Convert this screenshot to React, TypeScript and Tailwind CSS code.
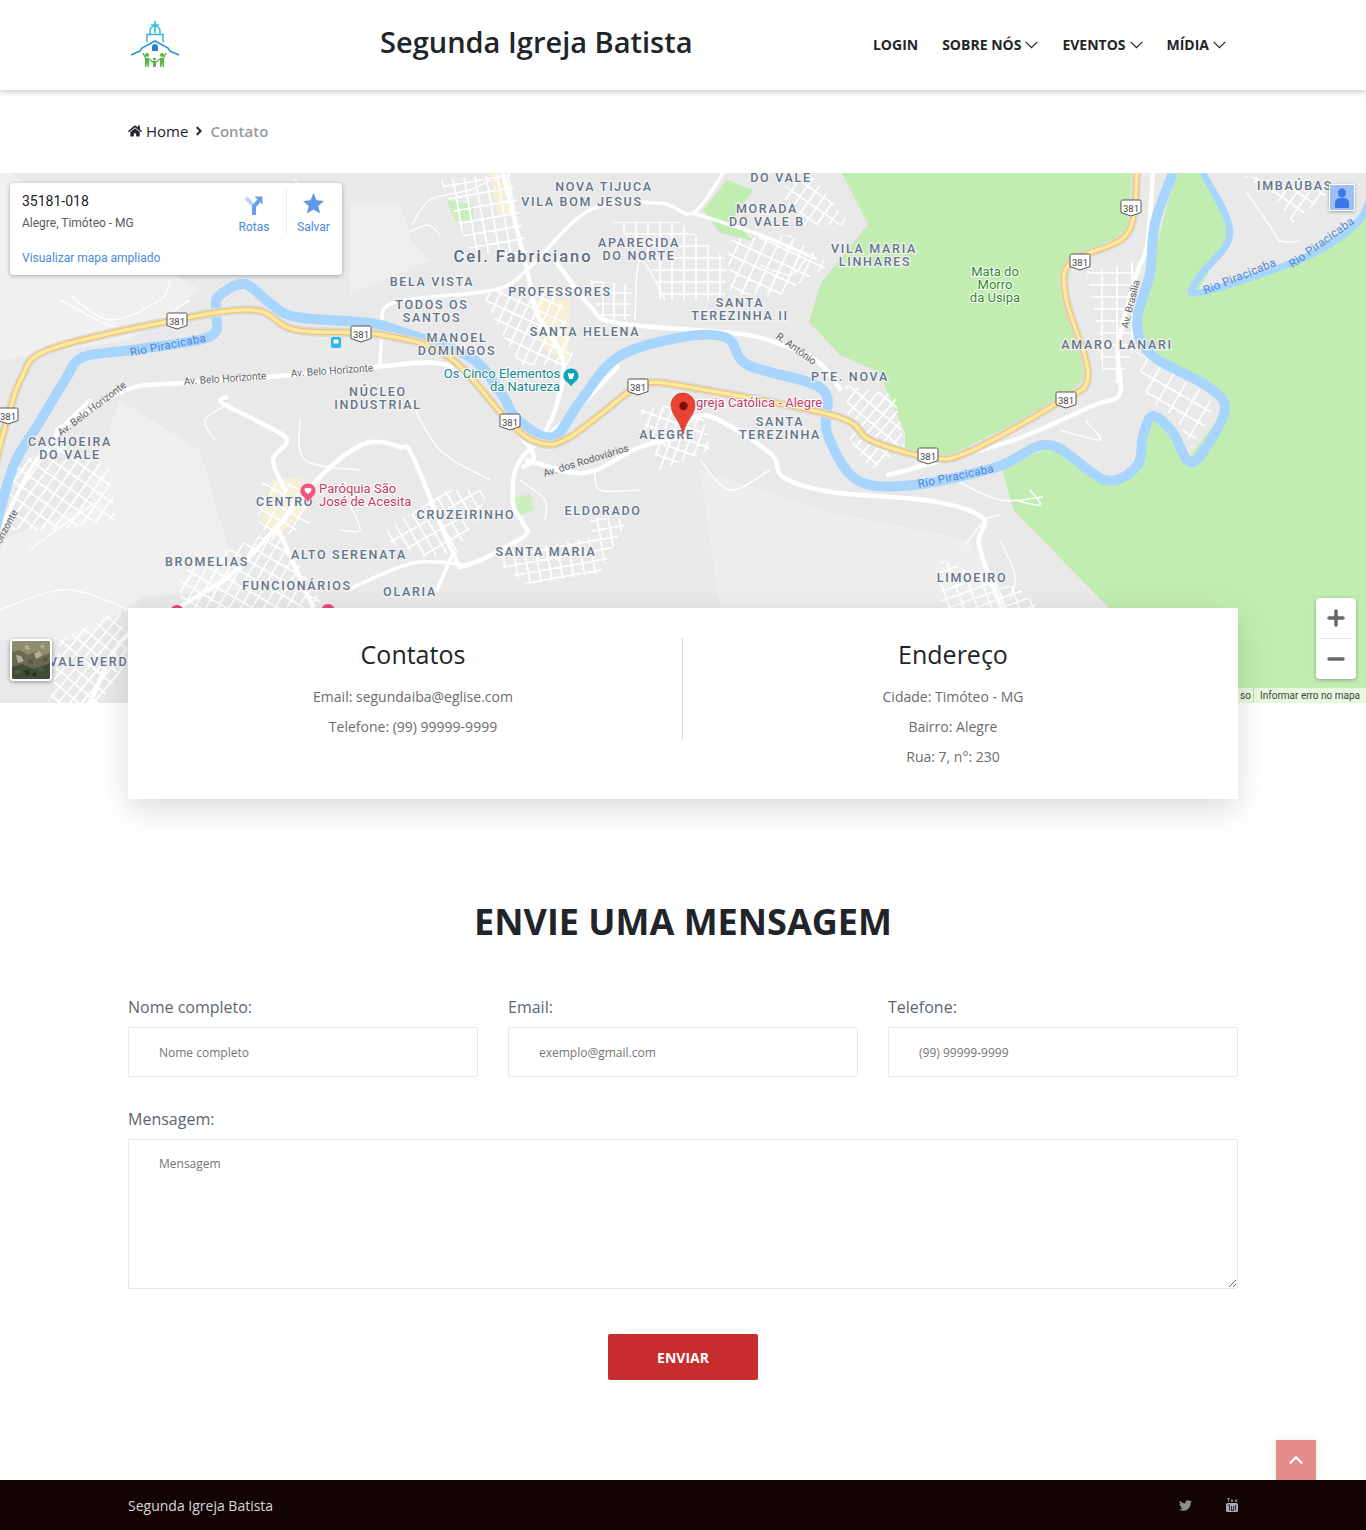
import { ChevronUp, Plus, Minus } from 'lucide-react';
import { FaHome, FaAngleRight, FaTwitter } from 'react-icons/fa';

type Pt = [number, number];

// catmull-rom through the traced points, so rivers and roads don't look faceted
function curve(points: Pt[]) {
  let d = `M${points[0][0]} ${points[0][1]}`;
  for (let i = 0; i < points.length - 1; i++) {
    const p0 = points[i - 1] || points[i];
    const p1 = points[i];
    const p2 = points[i + 1];
    const p3 = points[i + 2] || p2;
    const c1x = p1[0] + (p2[0] - p0[0]) / 6;
    const c1y = p1[1] + (p2[1] - p0[1]) / 6;
    const c2x = p2[0] - (p3[0] - p1[0]) / 6;
    const c2y = p2[1] - (p3[1] - p1[1]) / 6;
    d += ` C${c1x} ${c1y} ${c2x} ${c2y} ${p2[0]} ${p2[1]}`;
  }
  return d;
}

const river: Pt[] = [
  [-6, 535], [13, 467], [39, 423], [65, 380], [83, 357], [131, 350], [209, 337], [216, 313], [218, 297], [244, 284],
  [270, 303], [296, 317], [370, 323], [405, 333], [470, 357], [501, 393], [518, 420], [553, 437], [579, 403],
  [618, 357], [683, 337], [727, 338], [748, 365], [822, 389], [827, 433], [857, 480], [914, 485], [997, 467],
  [1049, 445], [1105, 480], [1137, 466], [1143, 436], [1153, 416], [1173, 433], [1187, 460], [1200, 456], [1225, 410],
  [1207, 386], [1153, 356], [1137, 323], [1150, 273], [1155, 223], [1173, 173],
];
const riverEast: Pt[] = [[1203, 173], [1230, 233], [1200, 276], [1197, 293], [1273, 270], [1320, 250], [1357, 223], [1370, 200]];

const highway: Pt[] = [
  [-4, 462], [9, 413], [22, 377], [48, 350], [165, 322], [253, 310], [296, 330], [383, 335], [449, 357], [510, 423],
  [540, 443], [570, 437], [631, 390], [645, 383], [683, 386], [835, 416], [870, 440], [927, 457], [966, 453],
  [1057, 403], [1088, 376], [1066, 298], [1071, 262], [1127, 234], [1137, 173],
];

const roads: Pt[][] = [
  [[57, 430], [126, 390], [183, 383], [292, 375], [375, 367], [436, 363], [470, 380], [531, 450], [523, 467]],
  [[226, 397], [222, 403], [261, 423], [287, 440], [273, 460], [285, 490]],
  [[277, 527], [327, 470], [367, 443], [400, 447], [413, 457], [453, 553], [467, 565], [523, 537], [523, 523], [513, 503], [520, 460], [566, 420], [618, 367]],
  [[527, 460], [584, 473], [640, 447], [683, 437]],
  [[277, 527], [313, 607]],
  [[277, 527], [230, 575], [174, 610], [122, 640], [90, 703]],
  [[683, 426], [709, 416], [770, 453], [783, 477], [831, 492], [931, 501], [983, 518], [979, 545], [1001, 607]],
  [[888, 475], [918, 467], [1014, 440], [1092, 406], [1120, 393], [1118, 346], [1137, 273], [1147, 246], [1153, 173]],
  [[557, 263], [590, 306], [617, 323], [733, 333], [777, 343], [817, 361], [840, 389]],
  [[503, 173], [527, 270], [537, 313], [563, 360], [555, 410], [540, 440]],
  [[723, 173], [693, 213], [660, 203], [590, 210], [527, 270], [493, 290], [393, 303], [383, 330], [380, 363]],
  [[347, 590], [413, 563], [467, 565]],
  [[453, 553], [437, 590]],
  [[693, 213], [760, 235], [815, 258]],
  [[0, 530], [30, 470], [60, 430], [90, 400]],
];

const thinRoads: Pt[][] = [
  [[70, 295], [110, 320], [160, 300], [170, 280]],
  [[230, 403], [205, 420], [215, 440]],
  [[300, 420], [305, 460], [360, 470]],
  [[410, 400], [440, 450], [490, 480]],
  [[150, 620], [70, 590], [0, 610]],
  [[30, 550], [70, 520], [100, 500]],
  [[700, 460], [730, 490], [770, 470]],
  [[955, 480], [1000, 500], [1043, 497]],
  [[1015, 500], [1040, 505], [1030, 490]],
  [[1085, 420], [1100, 440], [1060, 430]],
  [[1247, 193], [1270, 226], [1280, 241], [1300, 241]],
  [[412, 225], [430, 200], [470, 190], [490, 180]],
  [[410, 232], [428, 225], [440, 235]],
  [[665, 300], [640, 260], [635, 320]],
  [[760, 265], [790, 275], [805, 260]],
  [[595, 470], [600, 490], [640, 490]],
  [[520, 480], [545, 500], [545, 520]],
  [[340, 530], [360, 530], [350, 505]],
  [[295, 180], [320, 210], [340, 190]],
  [[60, 300], [130, 330], [190, 300]],
  [[965, 545], [985, 520], [1000, 515]],
  [[1000, 540], [1015, 575], [1010, 600]],
];

// neighbourhood street meshes: parallel lines clipped to the block's outline
const blocks: { id: string; shape: string; sx: number; sy: number; angle: number }[] = [
  { id: 'b1', shape: '1087,273 1137,261 1133,350 1120,386 1103,373 1097,326', sx: 15, sy: 12, angle: 0 },
  { id: 'b2', shape: '1135,351 1210,396 1212,413 1193,446 1173,416 1148,400', sx: 15, sy: 15, angle: 30 },
  { id: 'b3', shape: '1237,173 1327,193 1293,223 1273,193', sx: 10, sy: 13, angle: 35 },
  { id: 'b4', shape: '10,470 60,440 110,470 115,520 60,530 10,530', sx: 10, sy: 13, angle: 35 },
  { id: 'b5', shape: '440,180 510,173 530,260 470,250', sx: 11, sy: 13, angle: -10 },
  { id: 'b6', shape: '612,222 680,222 727,260 725,300 660,300 650,260', sx: 12, sy: 12, angle: 0 },
  { id: 'b7', shape: '727,240 790,235 830,265 780,295 730,295', sx: 12, sy: 14, angle: 25 },
  { id: 'b8', shape: '845,385 895,395 905,450 870,470 850,440', sx: 9, sy: 14, angle: 40 },
  { id: 'b9', shape: '387,530 447,490 490,490 457,553 427,557 390,543', sx: 10, sy: 14, angle: -30 },
  { id: 'b10', shape: '503,567 497,553 593,537 590,517 627,520 600,573 527,585', sx: 11, sy: 10, angle: -10 },
  { id: 'b11', shape: '180,573 277,527 323,607 180,610', sx: 10, sy: 13, angle: 30 },
  { id: 'b12', shape: '940,560 1020,590 1040,608 940,608', sx: 9, sy: 13, angle: 70 },
  { id: 'b13', shape: '640,410 700,400 710,450 660,470', sx: 9, sy: 12, angle: 20 },
  { id: 'b14', shape: '60,640 120,610 128,660 100,703 50,703', sx: 9, sy: 12, angle: 40 },
  { id: 'b15', shape: '263,483 300,483 310,523 273,543 257,520', sx: 12, sy: 12, angle: 30 },
  { id: 'b16', shape: '480,290 560,290 575,365 520,365 500,330', sx: 10, sy: 13, angle: 25 },
  { id: 'b17', shape: '590,280 632,285 630,320 600,320', sx: 11, sy: 11, angle: 0 },
  { id: 'b18', shape: '780,190 810,173 850,225 800,225', sx: 10, sy: 13, angle: 35 },
];

function StreetBlock({ id, shape, sx, sy, angle }: { id: string; shape: string; sx: number; sy: number; angle: number }) {
  const [cx, cy] = shape.split(' ')[0].split(',').map(Number);
  const lines: string[] = [];
  for (let i = -240; i <= 240; i += sy) lines.push(`M${cx - 300} ${cy + i}H${cx + 300}`);
  for (let i = -240; i <= 240; i += sx) lines.push(`M${cx + i} ${cy - 300}V${cy + 300}`);
  return (
    <g clipPath={`url(#${id})`}>
      <clipPath id={id}>
        <polygon points={shape} />
      </clipPath>
      <path d={lines.join('')} transform={`rotate(${angle} ${cx} ${cy})`} stroke="#fff" strokeWidth="1.7" fill="none" />
    </g>
  );
}

const places: [string, number, number][] = [
  ['NOVA TIJUCA', 604, 187], ['VILA BOM JESUS', 582, 202], ['DO VALE', 781, 178], ['MORADA', 767, 209],
  ['DO VALE B', 767, 222], ['APARECIDA', 639, 243], ['DO NORTE', 639, 256], ['VILA MARIA', 874, 249],
  ['LINHARES', 875, 262], ['BELA VISTA', 432, 282], ['PROFESSORES', 560, 292], ['TODOS OS', 432, 305],
  ['SANTOS', 432, 318], ['SANTA', 740, 303], ['TEREZINHA II', 740, 316], ['SANTA HELENA', 585, 332],
  ['MANOEL', 457, 338], ['DOMINGOS', 457, 351], ['AMARO LANARI', 1117, 345], ['PTE. NOVA', 850, 377],
  ['NÚCLEO', 378, 392], ['INDUSTRIAL', 378, 405], ['SANTA', 780, 422], ['TEREZINHA', 780, 435], ['ALEGRE', 667, 435],
  ['CACHOEIRA', 70, 442], ['DO VALE', 70, 455], ['ELDORADO', 603, 511], ['CRUZEIRINHO', 466, 515], ['CENTRO', 285, 502],
  ['ALTO SERENATA', 349, 555], ['SANTA MARIA', 546, 552], ['BROMELIAS', 207, 562], ['FUNCIONÁRIOS', 297, 586],
  ['OLARIA', 410, 592], ['LIMOEIRO', 972, 578], ['VALE VERDE', 93, 662], ['IMBAÚBAS', 1295, 186],
];

const streetNames: [string, number, number, number, string][] = [
  ['Rio Piracicaba', 168, 346, -11, '#4d86d8'],
  ['Rio Piracicaba', 956, 477, -12, '#4d86d8'],
  ['Rio Piracicaba', 1240, 277, -22, '#4d86d8'],
  ['Rio Piracicaba', 1322, 243, -36, '#4d86d8'],
  ['Av. Belo Horizonte', 225, 379, -4, '#5f6368'],
  ['Av. Belo Horizonte', 332, 371, -4, '#5f6368'],
  ['Av. Belo Horizonte', 92, 409, -37, '#5f6368'],
  ['Horizonte', 5, 530, -62, '#5f6368'],
  ['Av. dos Rodoviários', 586, 461, -17, '#5f6368'],
  ['R. Antônio', 796, 349, 36, '#5f6368'],
  ['Av. Brasília', 1131, 304, -76, '#5f6368'],
];

const shields: Pt[] = [[177, 321], [361, 334], [8, 416], [510, 422], [638, 387], [928, 456], [1066, 400], [1080, 262], [1131, 208]];

function Shield({ x, y }: { x: number; y: number }) {
  return (
    <g transform={`translate(${x} ${y})`}>
      <path d="M-10 -6.5a1.5 1.5 0 0 1 1.5-1.5h17a1.5 1.5 0 0 1 1.5 1.5v11l-10 3.5-10-3.5z" fill="#fff" stroke="#555" strokeWidth="1" />
      <text y="3.5" textAnchor="middle" className="font-['Roboto'] text-[9.5px]" fill="#444">381</text>
    </g>
  );
}

function MapLabel({ x, y, lines, color, anchor = 'start' }: { x: number; y: number; lines: string[]; color: string; anchor?: 'start' | 'middle' }) {
  return (
    <text x={x} y={y} textAnchor={anchor} fill={color} stroke="#fff" strokeWidth="2" className="font-['Roboto'] text-[13px] [paint-order:stroke]">
      {lines.map((line, i) => (
        <tspan key={i} x={x} dy={i ? 13 : 0}>
          {line}
        </tspan>
      ))}
    </text>
  );
}

function MapArt() {
  return (
    <svg viewBox="0 173 1366 530" className="block w-full h-full">
      <rect x="0" y="173" width="1366" height="530" fill="#e9e9e9" />
      <polygon points="0,173 10,173 200,290 130,340 0,360" fill="#f1f0ee" />
      <polygon points="350,203 400,203 413,243 430,260 393,276 350,293" fill="#efefed" />
      <polygon points="120,400 200,450 240,590 100,600 90,480" fill="#efefed" />
      <polygon points="0,540 100,500 170,580 80,640 0,640" fill="#f0f0ee" />
      <polygon points="700,470 820,510 970,540 1010,610 720,610" fill="#efeeec" />
      <polygon points="1000,470 1060,445 1090,480 1020,500" fill="#efeeec" />
      <polygon points="842,173 868,224 821,283 809,322 840,355 879,372 905,433 905,450 940,460 1057,403 1088,376 1066,298 1071,262 1127,234 1132,173" fill="#c2edb0" />
      <polygon points="1175,173 1203,173 1230,233 1197,293 1288,264 1366,217 1366,703 1130,703 1108,607 1014,511 1001,467 1062,443 1105,482 1137,466 1153,416 1187,460 1225,410 1207,386 1153,356 1137,323 1150,273" fill="#c2edb0" />
      <polygon points="727,180 753,190 733,220 753,241 720,233 703,210" fill="#c2edb0" />
      <polygon points="447,200 473,205 473,221 455,221" fill="#c9eeb9" />
      <polygon points="514,498 530,494 534,510 518,516" fill="#cdeebd" />
      <polygon points="272,480 300,478 306,510 275,540 262,520" fill="#f8efd8" />
      <polygon points="530,300 570,300 568,360 545,350" fill="#f8efd8" />
      <polygon points="490,173 505,173 514,215 498,215" fill="#f8efd8" />

      {thinRoads.map((r, i) => (
        <path key={i} d={curve(r)} fill="none" stroke="#fff" strokeWidth="1.4" />
      ))}
      {blocks.map(b => (
        <StreetBlock key={b.id} {...b} />
      ))}
      {roads.map((r, i) => (
        <path key={i} d={curve(r)} fill="none" stroke="#fff" strokeWidth={i < 10 ? 4.5 : 3.5} strokeLinecap="round" strokeLinejoin="round" />
      ))}
      <path d={curve(river)} fill="none" stroke="#a8d5fd" strokeWidth="10" strokeLinejoin="round" />
      <path d={curve(riverEast)} fill="none" stroke="#a8d5fd" strokeWidth="7" strokeLinejoin="round" />
      <path d={curve(highway)} fill="none" stroke="#d9d9d9" strokeWidth="9" strokeLinejoin="round" />
      <path d={curve(highway)} fill="none" stroke="#f5c35f" strokeWidth="5.5" strokeLinejoin="round" />
      <path d={curve(highway)} fill="none" stroke="#fde9a2" strokeWidth="3.5" strokeLinejoin="round" />

      {shields.map(([x, y]) => (
        <Shield key={`${x}-${y}`} x={x} y={y} />
      ))}

      <g fontWeight="500">
        {places.map(([name, x, y]) => (
          <text key={`${name}-${x}`} x={x} y={y + 4} textAnchor="middle" fill="#64748a" stroke="#f4f4f4" strokeWidth="2.4" className="font-['Roboto'] text-[12.5px] tracking-[1.7px] [paint-order:stroke]">
            {name}
          </text>
        ))}
      </g>
      <text x="523" y="262" textAnchor="middle" fill="#5e6b7c" stroke="#f4f4f4" strokeWidth="2.4" className="font-['Roboto'] text-[16.5px] font-medium tracking-[1.95px] [paint-order:stroke]">
        Cel. Fabriciano
      </text>
      {streetNames.map(([name, x, y, angle, color], i) => (
        <text key={i} transform={`translate(${x} ${y}) rotate(${angle})`} y="3" textAnchor="middle" fill={color} className={name.startsWith('Rio') ? "font-['Roboto'] text-[11.5px] tracking-[0.3px]" : "font-['Roboto'] text-[10.2px]"}>
          {name}
        </text>
      ))}

      <MapLabel x={995} y={276} lines={['Mata do', 'Morro', 'da Usipa']} color="#2b8a1e" anchor="middle" />
      <MapLabel x={502} y={378} lines={['Os Cinco Elementos']} color="#12858f" anchor="middle" />
      <MapLabel x={525} y={391} lines={['da Natureza']} color="#12858f" anchor="middle" />
      <MapLabel x={319} y={493} lines={['Paróquia São', 'José de Acesita']} color="#c23a68" />
      <MapLabel x={696} y={407} lines={['greja Católica - Alegre']} color="#c23a68" />

      <rect x="331" y="337" width="10" height="11" rx="2" fill="#29b6f6" />
      <rect x="333.500" y="339.500" width="5" height="4" fill="#fff" />
      <g transform="translate(571 378)">
        <path d="M0 9C-2 5-8 3-8-2a8 8 0 0 1 16 0C8 3 2 5 0 9z" fill="#12a5b5" stroke="#fff" strokeWidth="0.7" />
        <path d="M-3-5h1.500v1h1v-1h1v1h1v-1H3v3l-1 1v2h-4v-2l-1-1z" fill="#fff" />
      </g>
      <g transform="translate(308 493)">
        <path d="M0 10C-2 5-8 3-8-2a8 8 0 0 1 16 0C8 3 2 5 0 10z" fill="#f4527e" stroke="#fff" strokeWidth="0.7" />
        <path d="M0-4.500c-1-1.500-3.800-.8-3.500 1.400C-3.300-1.500-1.200 0 0 1c1.200-1 3.300-2.500 3.500-4.100.3-2.200-2.500-2.900-3.500-1.400z" fill="#fff" />
      </g>
      <circle cx="177" cy="612" r="7" fill="#e8457a" />
      <circle cx="328" cy="611" r="7" fill="#e8457a" />

      <circle cx="681" cy="400" r="7" fill="#e8457a" />
      <path d="M683 434C680 420 671 415 671 405a12 12 0 0 1 24 0C695 415 686 420 683 434z" fill="#ea4335" stroke="#c5352a" strokeWidth="0.6" />
      <circle cx="683.500" cy="406" r="4.200" fill="#7b0d0d" />
    </svg>
  );
}

function InfoWindow() {
  return (
    <div className="absolute left-[10px] top-[10px] w-[332px] h-[92px] bg-white rounded-sm shadow-[0_1px_4px_rgba(0,0,0,0.3)] font-['Roboto',sans-serif] pl-3 pt-[9px]">
      <div className="text-sm leading-[19px] text-[#202124]">35181-018</div>
      <div className="text-xs leading-4 mt-[4px] text-[#5b5b5b]">Alegre, Timóteo - MG</div>
      <div className="text-xs leading-4 mt-[19px] text-[#4a89dc]">Visualizar mapa ampliado</div>
      <div className="absolute left-[229px] top-[12px] w-[30px] flex flex-col items-center">
        <svg width="20" height="20" viewBox="0 0 20 20">
          <path d="M2 2.500l7 8" stroke="#b8d4f7" strokeWidth="4" fill="none" />
          <path d="M10 20v-8.500l5-6" stroke="#6a9fe8" strokeWidth="4" fill="none" />
          <path d="M10.500 1.500h8v8z" fill="#6a9fe8" />
        </svg>
        <span className="text-xs leading-4 mt-[4px] text-[#4a89dc]">Rotas</span>
      </div>
      <div className="absolute left-[276px] top-[5px] w-[1px] h-[46px] bg-[#ececec]" />
      <div className="absolute left-[285px] top-[10px] w-[37px] flex flex-col items-center">
        <svg width="21" height="21" viewBox="0 0 21 21">
          <path d="M10.500 0l3 7.300 7.500.6-5.700 5 1.800 7.600-6.600-4.100-6.600 4.100 1.800-7.600-5.700-5 7.500-.6z" fill="#5f97e6" />
        </svg>
        <span className="text-xs leading-4 mt-[5px] text-[#4a89dc]">Salvar</span>
      </div>
    </div>
  );
}

function MapControls() {
  return (
    <>
      <div className="absolute left-[1329px] top-[11px] w-[26px] h-[27px] bg-[#9dbff7] border border-white shadow-[0_1px_3px_rgba(0,0,0,0.3)] flex items-center justify-center">
        <svg width="16" height="20" viewBox="0 0 16 20">
          <ellipse cx="8" cy="5" rx="4" ry="4.500" fill="#3b78e7" />
          <path d="M1 20v-5a5 5 0 0 1 5-5h4a5 5 0 0 1 5 5v5z" fill="#3b78e7" />
        </svg>
      </div>
      <div className="absolute left-[1316px] top-[425px] w-[40px] h-[81px] bg-white rounded-sm shadow-[0_1px_4px_rgba(0,0,0,0.3)] flex flex-col items-center text-[#666]">
        <div className="h-[40px] flex items-center justify-center">
          <Plus size={24} strokeWidth={3.5} absoluteStrokeWidth />
        </div>
        <div className="w-[30px] h-[1px] bg-[#e6e6e6]" />
        <div className="flex-1 flex items-center justify-center">
          <Minus size={24} strokeWidth={3.5} absoluteStrokeWidth />
        </div>
      </div>
      <div className="absolute left-[10px] top-[466px] w-[42px] h-[42px] border-2 border-white rounded-sm shadow-[0_1px_4px_rgba(0,0,0,0.4)] overflow-hidden">
        <svg viewBox="0 0 38 38" className="block w-full h-full">
          <rect width="38" height="38" fill="#6b6a50" />
          <path d="M0 0h38v12l-8 3-6-5-8 4-9-5-7 2z" fill="#8f8c70" />
          <path d="M0 26l10-3 12 5 16-6v16H0z" fill="#3f4c38" />
          <path d="M4 14l5 1 3 5-6 2zM22 12l6-2 2 5-6 3zM13 4l4 1 1 4-5-1zM29 3l4 2-2 3-3-2z" fill="#b5ae96" />
          <path d="M16 18l5 1 1 4-6-1zM2 30l5-2 2 4-5 2zM26 27l5-2 1 5-5 1zM32 16l4 1-1 4-4-1z" fill="#55593f" />
          <path d="M12 30l4-1 2 4-4 2zM20 33l3-2 2 3-3 2z" fill="#26341f" />
        </svg>
      </div>
      <div className="absolute right-0 bottom-0 h-[15px] w-[128px] bg-[rgba(255,255,255,0.6)] font-['Roboto',sans-serif] text-[10px] leading-[15px] text-[#444] flex">
        <span className="w-[16px] pl-[2px] border-r border-[#bcdca9]">so</span>
        <span className="pl-[6px]">Informar erro no mapa</span>
      </div>
    </>
  );
}

function NavItem({ label, caret }: { label: string; caret?: boolean }) {
  return (
    <a className="flex items-center gap-1 text-sm font-bold text-[#212529] uppercase cursor-pointer">
      {label}
      {caret && (
        <svg width="13" height="8" viewBox="0 0 13 8" className="block">
          <path d="M.7.8l5.800 5.800L12.300.8" fill="none" stroke="#212529" strokeWidth="1.200" />
        </svg>
      )}
    </a>
  );
}

function Logo() {
  return (
    <svg width="52" height="50" viewBox="0 0 52 50" className="block">
      <path d="M27 2v12M23 6h8" stroke="#27c3c9" strokeWidth="1.600" fill="none" />
      <path d="M22 15v-3a5 5 0 0 1 10 0v3" stroke="#30bfe0" strokeWidth="1.500" fill="none" />
      <path d="M19 23v-7.500h16V23" stroke="#30b5e6" strokeWidth="1.500" fill="none" />
      <path d="M3 36l9-4 2-3 13-7 13 7 2 3 9 4" stroke="#2a93dc" strokeWidth="1.600" fill="none" />
      <path d="M24 32v-4a3 3 0 0 1 6 0v4z" fill="#2a7fd0" />
      <g fill="#59b548">
        <circle cx="19" cy="36" r="2" />
        <circle cx="34" cy="36" r="2" />
        <circle cx="26.500" cy="40" r="1.500" />
        <path d="M17 48V39h4v9h-1.300l-.7-4-.7 4z" />
        <path d="M32 48V39h4v9h-1.300l-.7-4-.7 4z" />
        <path d="M25 48v-6h3v6z" />
      </g>
      <path d="M15 34l3 6M21 40l5 4M38 34l-3 6M32 40l-5 4" stroke="#59b548" strokeWidth="1.400" fill="none" />
    </svg>
  );
}

function Field({ label, placeholder }: { label: string; placeholder: string }) {
  return (
    <label className="block">
      <span className="block text-base leading-6 mb-2 text-[#5c6670]">{label}</span>
      <input
        placeholder={placeholder}
        className="block w-full h-[50px] border border-[#e8e8e8] rounded-[2px] pl-[30px] text-xs outline-none placeholder:text-[#757575]"
      />
    </label>
  );
}

export default function App() {
  return (
    <div className="relative font-['Open_Sans',sans-serif] bg-white h-[1530px] overflow-hidden">
      <header className="relative z-20 h-[90px] bg-white shadow-[0_2px_6px_rgba(0,0,0,0.2)]">
        <div className="w-[1110px] mx-auto h-full flex items-center">
          <div className="pb-[2px] -mt-[1px]">
            <Logo />
          </div>
          <h1 className="ml-[200px] text-[29px] font-semibold text-[#212529] -mt-[6px]">Segunda Igreja Batista</h1>
          <nav className="ml-auto mr-[12px] flex items-center gap-6">
            <NavItem label="Login" />
            <NavItem label="Sobre nós" caret />
            <NavItem label="Eventos" caret />
            <NavItem label="Mídia" caret />
          </nav>
        </div>
      </header>

      <div className="h-[83px] w-[1110px] mx-auto flex items-center text-[15px] pb-[1px]">
        <FaHome className="text-[#212529] text-[14px] mr-1" />
        <a className="text-[#212529] font-medium">Home</a>
        <FaAngleRight className="mx-[4px] text-[#333] text-[14px]" />
        <span className="text-[#999] font-semibold">Contato</span>
      </div>

      <section className="relative h-[530px]">
        <MapArt />
        <InfoWindow />
        <MapControls />
      </section>

      <section className="relative z-10 w-[1110px] mx-auto -mt-[95px] bg-white shadow-[0_10px_30px_rgba(0,0,0,0.14)] px-[15px] pt-[30px] pb-[27px] grid grid-cols-2 text-center text-sm leading-[30px] text-[#6c6c6c]">
        <div className="h-[101px] border-r border-[#d6d6d6] pl-[1px]">
          <h3 className="text-[25px] font-medium leading-8 mb-3 text-[#212529]">Contatos</h3>
          <p>Email: segundaiba@eglise.com</p>
          <p>Telefone: (99) 99999-9999</p>
        </div>
        <div>
          <h3 className="text-[25px] font-medium leading-8 mb-3 text-[#212529]">Endereço</h3>
          <p>Cidade: Timóteo - MG</p>
          <p>Bairro: Alegre</p>
          <p>Rua: 7, n°: 230</p>
        </div>
      </section>

      <section className="w-[1110px] mx-auto">
        <h2 className="mt-[96px] text-center text-4xl leading-[54px] font-bold text-[#212529]">ENVIE UMA MENSAGEM</h2>
        <form className="mt-[46px]">
          <div className="grid grid-cols-3 gap-[30px]">
            <Field label="Nome completo:" placeholder="Nome completo" />
            <Field label="Email:" placeholder="exemplo@gmail.com" />
            <Field label="Telefone:" placeholder="(99) 99999-9999" />
          </div>
          <label className="block mt-[30px]">
            <span className="block text-base leading-6 mb-2 text-[#5c6670]">Mensagem:</span>
            <textarea
              placeholder="Mensagem"
              className="block w-full h-[150px] border border-[#e8e8e8] rounded-[2px] pl-[30px] pt-[16px] text-xs outline-none placeholder:text-[#757575]"
            />
          </label>
          <button type="button" className="block mx-auto mt-[45px] w-[150px] h-[46px] bg-[#c82d2d] rounded-[2px] pt-[2px] text-sm font-bold text-white">
            ENVIAR
          </button>
        </form>
      </section>

      <a className="absolute right-[50px] bottom-[50px] z-30 w-[40px] h-[40px] bg-[#e48c8b] shadow-[0_0_8px_rgba(0,0,0,0.1)] flex items-center justify-center text-white">
        <ChevronUp size={22} strokeWidth={2.5} />
      </a>

      <footer className="absolute bottom-0 left-0 right-0 h-[50px] bg-[#120405]">
        <div className="w-[1110px] mx-auto h-full flex items-center text-sm text-[#d8d8d8]">
          <span className="pt-[2px]">Segunda Igreja Batista</span>
          <FaTwitter className="ml-auto mr-[34px] text-[#8f8f8f] text-[13px]" />
          <svg width="12" height="14" viewBox="0 0 12 14">
            <path d="M1 0l1 2v2h1V2l1-2zM5 1.500h2V4H5zM8 1.500h1V4h2V1.500h-1" fill="#7f7f8f" />
            <rect y="5" width="12" height="9" rx="1.500" fill="#a8a8a8" />
            <path d="M2 6.500h2v6H3V7.500H2zM5 8h1v4h1V8h1v5H5zM9 7h1v5.500H9z" fill="#2a2a35" />
          </svg>
        </div>
      </footer>
    </div>
  );
}
